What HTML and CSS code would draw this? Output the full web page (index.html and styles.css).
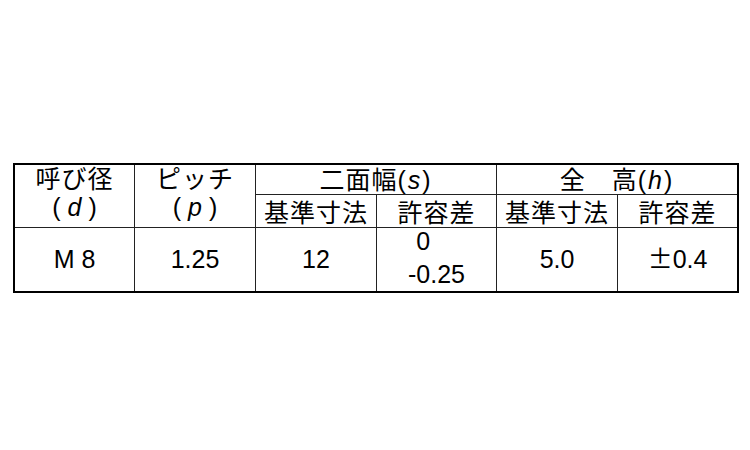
FILE: index.html
```html
<!DOCTYPE html>
<html lang="ja">
<head>
<meta charset="utf-8">
<title>M8 寸法表</title>
<link rel="stylesheet" href="styles.css">
</head>
<body>
<div class="page">
  <table class="spec">
    <colgroup>
      <col class="w120"><col class="w121"><col class="w121"><col class="w120"><col class="w121"><col class="w119">
    </colgroup>
    <tr class="r1">
      <td rowspan="2" class="stack"><span class="jp">呼び径</span><br><span class="par">( <i>d</i> )</span></td>
      <td rowspan="2" class="stack"><span class="jp">ピッチ</span><br><span class="par">( <i>p</i> )</span></td>
      <td colspan="2" class="grp"><span class="jp">二面幅</span><span class="par tight">(<i>s</i>)</span></td>
      <td colspan="2" class="grp"><span class="jp">全　高</span><span class="par tight">(<i>h</i>)</span></td>
    </tr>
    <tr class="r2">
      <td class="sub"><span class="jp">基準寸法</span></td>
      <td class="sub"><span class="jp">許容差</span></td>
      <td class="sub"><span class="jp">基準寸法</span></td>
      <td class="sub"><span class="jp">許容差</span></td>
    </tr>
    <tr class="r3">
      <td>M 8</td>
      <td>1.25</td>
      <td>12</td>
      <td><div class="tol"><span class="ghost">-</span>0<br>-0.25</div></td>
      <td>5.0</td>
      <td><span class="pm">±</span>0.4</td>
    </tr>
  </table>
</div>
</body>
</html>
```

FILE: styles.css
```css
body {
  margin: 0;
  background: #fff;
}

.page {
  padding: 163px 0 0 13px;
}

.spec {
  border-collapse: separate;
  border-spacing: 0;
  border: 2px solid #000;
  table-layout: fixed;
  width: 726px;
  font-family: "Liberation Sans", "Noto Sans CJK JP", sans-serif;
  font-size: 25px;
  color: #000;
}

.w119 { width: 119px; }
.w120 { width: 120px; }
.w121 { width: 121px; }

.spec td {
  padding: 0;
  text-align: center;
  vertical-align: middle;
  border-right: 1px solid #222;
  border-bottom: 1px solid #222;
  white-space: nowrap;
  overflow: visible;
}

.spec td:last-child {
  border-right: 0;
}

.r1 { height: 30px; }
.r2 { height: 33px; }
.r3 { height: 63px; }

.r3 td {
  border-bottom: 0;
  line-height: 33px;
}

.jp {
  font-family: "Noto Sans CJK JP", sans-serif;
  letter-spacing: 1px;
  line-height: 1;
}

.par i {
  font-style: italic;
}

.par.tight {
  letter-spacing: 2px;
}

.stack {
  line-height: 28px;
  vertical-align: top !important;
}

.grp {
  line-height: 28px;
}

.sub {
  line-height: 25px;
  padding-top: 3px !important;
}

.tol {
  width: fit-content;
  margin: -8px auto -4px;
  text-align: left;
  line-height: 33px;
}

.ghost {
  visibility: hidden;
}

.pm {
  font-family: "Noto Sans CJK JP", sans-serif;
  line-height: 1;
}
```
